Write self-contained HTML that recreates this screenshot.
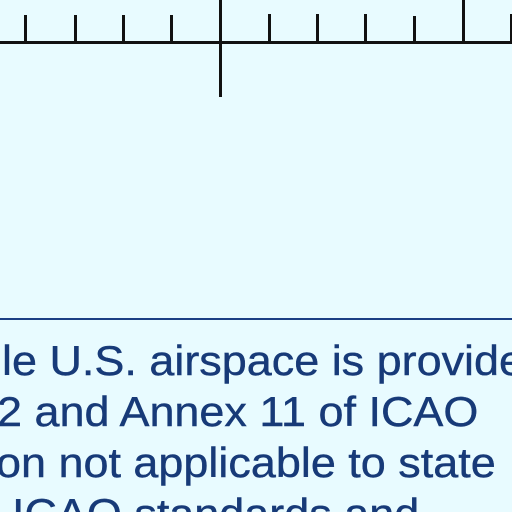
<!DOCTYPE html>
<html><head><style>
html,body{margin:0;padding:0;width:512px;height:512px;overflow:hidden;background:#e8fbff;position:relative}
.h{position:absolute;background:#111}
.t{position:absolute;white-space:nowrap;font-family:"Liberation Sans",sans-serif;font-size:42px;line-height:51px;color:#173a78;transform:scaleX(1.07);transform-origin:0 0;-webkit-text-stroke:0.4px #173a78}
</style></head><body>
<div class="h" style="left:0;top:41px;width:512px;height:3px"></div>
<div class="h" style="left:24px;top:15px;width:3px;height:28px"></div>
<div class="h" style="left:74px;top:15px;width:3px;height:28px"></div>
<div class="h" style="left:122px;top:15px;width:3px;height:28px"></div>
<div class="h" style="left:170px;top:15px;width:3px;height:28px"></div>
<div class="h" style="left:219px;top:0;width:3px;height:97px"></div>
<div class="h" style="left:268px;top:14px;width:3px;height:29px"></div>
<div class="h" style="left:316px;top:14px;width:3px;height:29px"></div>
<div class="h" style="left:364px;top:14px;width:3px;height:29px"></div>
<div class="h" style="left:413px;top:16px;width:3px;height:27px"></div>
<div class="h" style="left:462px;top:0;width:3px;height:43px"></div>
<div class="h" style="left:510px;top:14px;width:2px;height:29px"></div>
<div style="position:absolute;left:0;top:318px;width:512px;height:2px;background:#1b3f84"></div>
<div style="position:absolute;left:0;top:0;width:512px;height:512px;overflow:hidden">
<div class="t" style="left:-23px;top:335px">dle U.S. airspace is provide</div>
<div class="t" style="left:-3px;top:386px">2 and Annex 11 of ICAO</div>
<div class="t" style="left:-4px;top:437px">on not applicable to state</div>
<div class="t" style="left:12px;top:488px">ICAO standards and</div>
</div>
</body></html>
